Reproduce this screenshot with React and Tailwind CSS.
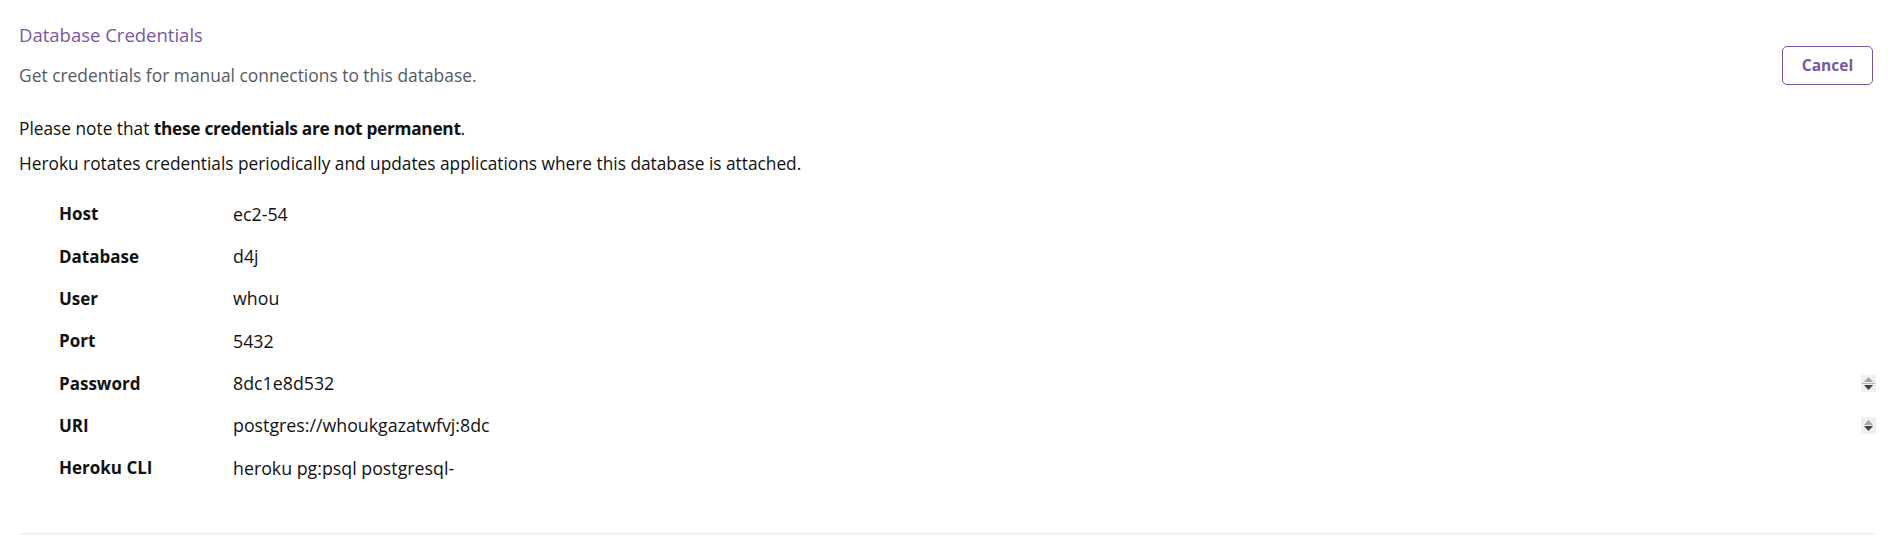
import React from "react";

const rows = [
  { label: "Host", value: "ec2-54" },
  { label: "Database", value: "d4j" },
  { label: "User", value: "whou" },
  { label: "Port", value: "5432" },
  { label: "Password", value: "8dc1e8d532", spin: true, hover: true },
  { label: "URI", value: "postgres://whoukgazatwfvj:8dc", spin: true },
  { label: "Heroku CLI", value: "heroku pg:psql postgresql-" },
];

function Spinner({ hover }) {
  return (
    <div className="w-[15px] h-[17px] bg-[#efefef] flex flex-col items-center justify-center gap-[1px]">
      <svg width="9" height="5" viewBox="0 0 9 5"><path d="M4.5 0 L9 5 L0 5 Z" fill="#a3a3a3" /></svg>
      {hover && <div className="w-[13px] h-px bg-[#b5b5b5]" />}
      <svg width="9" height="5" viewBox="0 0 9 5"><path d="M0 0 L9 0 L4.5 5 Z" fill="#3f3f3f" /></svg>
    </div>
  );
}

export default function App() {
  return (
    <div className="min-h-screen bg-white px-[19px] pt-[23px] text-[17.3px] text-[#111]" style={{ fontFamily: '"Open Sans", sans-serif' }}>
      <div className="flex justify-between items-start">
        <div>
          <div className="text-[18.5px] leading-[24px] text-[#79589f]">Database Credentials</div>
          <div className="mt-[16px] text-[17.4px] leading-[24px] text-[#555a63]">Get credentials for manual connections to this database.</div>
        </div>
        <button className="mt-[23px] mr-[3px] w-[91px] h-[39px] rounded-[5px] border border-[#79589f] text-[15.5px] font-bold text-[#79589f]">
          Cancel
        </button>
      </div>

      <div className="mt-[24px]">
        <p className="leading-[35px]">Please note that <b className="tracking-[-0.3px]">these credentials are not permanent</b>.</p>
        <p className="leading-[35px]">Heroku rotates credentials periodically and updates applications where this database is attached.</p>
      </div>

      <div className="mt-[12px] ml-[40px]">
        {rows.map((r) => (
          <div key={r.label} className="flex items-center h-[42.3px]">
            <div className="w-[174px] text-[17px] font-bold">{r.label}</div>
            <div className="flex-1 text-[17.8px]">{r.value}</div>
            {r.spin && <Spinner hover={r.hover} />}
          </div>
        ))}
      </div>

      <div className="mt-[44px] h-px bg-[#ececec]" />
    </div>
  );
}
